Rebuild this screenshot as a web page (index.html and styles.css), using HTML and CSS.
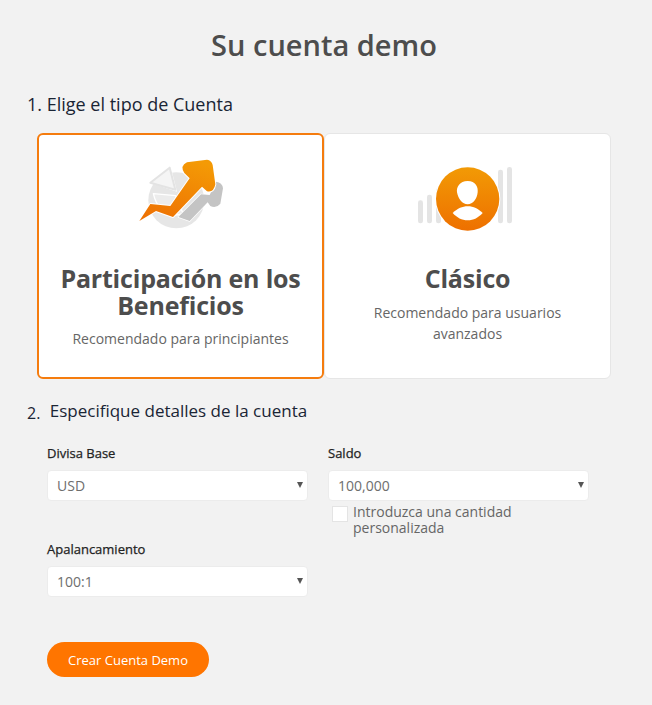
FILE: index.html
```html
<!DOCTYPE html>
<html lang="es">
<head>
<meta charset="utf-8">
<title>Su cuenta demo</title>
<link rel="stylesheet" href="styles.css">
</head>
<body>
<main class="page">
  <h1 class="title">Su cuenta demo</h1>
  <h2 class="step step-one">1. Elige el tipo de Cuenta</h2>
  <div class="cards">
    <div class="card card-selected">
      <svg class="icon" width="120" height="95" viewBox="0 0 360 285" aria-hidden="true">
        <defs>
          <linearGradient id="arrowGrad" x1="0.7" y1="0" x2="0.3" y2="1">
            <stop offset="0" stop-color="#f49a05"/>
            <stop offset="1" stop-color="#ee7203"/>
          </linearGradient>
        </defs>
        <circle cx="166" cy="166" r="84" fill="#e6e6e6"/>
        <path d="M97 146 L164 152 L186 205 Q170 212 150 210 Q110 200 97 146 Z" fill="#ececec" stroke="#ffffff" stroke-width="4" stroke-linejoin="round"/>
        <path d="M82 112 L148 60 L168 140 Z" fill="#ffffff"/>
        <path d="M88 113 L146 68 L163 134 Z" fill="#f5f5f5" stroke="#e3e3e3" stroke-width="6" stroke-linejoin="round"/>
        <path d="M172 216 L240 148 L266 150 L285 110 Q304 112 306 130 L298 176 Q285 192 268 183 L260 172 L206 228 Z" fill="#c4c4c4" stroke="#ffffff" stroke-width="4" stroke-linejoin="round" paint-order="stroke"/>
        <path d="M55 228 L88 177 L148 183 L206 100 L190 84 Q176 62 198 52 L258 44 Q272 46 275 60 L283 118 Q278 144 258 139 L243 125 L156 216 L105 198 Z" fill="url(#arrowGrad)" stroke="#ffffff" stroke-width="6" stroke-linejoin="round" paint-order="stroke"/>
      </svg>
      <h3 class="card-title">Participación en los Beneficios</h3>
      <p class="card-text">Recomendado para principiantes</p>
    </div>
    <div class="card">
      <svg class="icon icon-user" width="120" height="85" viewBox="0 0 360 255" aria-hidden="true">
        <defs>
          <linearGradient id="userGrad" x1="0" y1="0" x2="0" y2="1">
            <stop offset="0" stop-color="#f29a05"/>
            <stop offset="1" stop-color="#ee7000"/>
          </linearGradient>
        </defs>
        <g fill="#e4e4e4">
          <rect x="39" y="136" width="15" height="69" rx="7"/>
          <rect x="66" y="119" width="15" height="86" rx="7"/>
          <rect x="93" y="100" width="15" height="105" rx="7"/>
          <rect x="279" y="44" width="15" height="161" rx="7"/>
          <rect x="306" y="36" width="15" height="169" rx="7"/>
        </g>
        <circle cx="188" cy="132" r="98" fill="#ffffff"/>
        <circle cx="188" cy="132" r="95" fill="url(#userGrad)"/>
        <path d="M188 78 C212 78 220 96 218 112 C216 132 204 148 188 148 C172 148 160 132 156 112 C154 96 164 78 188 78 Z" fill="#ffffff"/>
        <path d="M143 174 C158 160 172 154 188 154 C206 154 220 162 233 174 C220 188 206 196 188 196 C170 196 156 188 143 174 Z" fill="#ffffff"/>
      </svg>
      <h3 class="card-title">Clásico</h3>
      <p class="card-text">Recomendado para usuarios avanzados</p>
    </div>
  </div>
  <h2 class="step step-two"><span class="step-num">2.</span> Especifique detalles de la cuenta</h2>
  <form class="form">
    <div class="field">
      <label class="label" for="currency">Divisa Base</label>
      <div class="select-wrap">
        <select class="select" id="currency"><option>USD</option></select>
      </div>
    </div>
    <div class="field">
      <label class="label" for="balance">Saldo</label>
      <div class="select-wrap">
        <select class="select" id="balance"><option>100,000</option></select>
      </div>
      <label class="custom">
        <span class="checkbox"></span>
        <span class="custom-text">Introduzca una cantidad personalizada</span>
      </label>
    </div>
    <div class="field field-leverage">
      <label class="label" for="leverage">Apalancamiento</label>
      <div class="select-wrap">
        <select class="select" id="leverage"><option>100:1</option></select>
      </div>
    </div>
  </form>
  <button class="submit" type="button">Crear Cuenta Demo</button>
</main>
</body>
</html>
```

FILE: styles.css
```css
* { box-sizing: border-box; }
html, body { margin: 0; padding: 0; }
body {
  background: #f2f2f2;
  font-family: "Open Sans", "Liberation Sans", sans-serif;
  color: #4d4d4d;
}
.page {
  width: 652px;
  height: 705px;
  padding: 25px 0 0 27px;
  overflow: hidden;
}
.title {
  margin: 0 0 0 -27px;
  width: 648px;
  text-align: center;
  font-size: 29px;
  line-height: 40px;
  font-weight: 600;
  color: #4d4d4d;
}
.step {
  margin: 0;
  font-weight: 400;
  line-height: 24px;
  color: #1a2535;
}
.step-one { margin-top: 27px; font-size: 18px; }
.cards {
  display: flex;
  margin: 17px 0 0 10px;
  width: 574px;
  height: 246px;
}
.card {
  flex: 0 0 287px;
  background: #fff;
  border: 1px solid #e6e6e6;
  border-radius: 6px;
  display: flex;
  flex-direction: column;
  align-items: center;
  text-align: center;
  padding: 11px 20px 0;
}
.card-selected {
  border: 2px solid #f57c0e;
  padding-top: 10px;
}
.icon { flex: none; display: block; }
.icon-user { margin: 10px 5px 0 0; }
.card-title {
  margin: 25px 0 0;
  font-size: 25px;
  line-height: 27px;
  font-weight: 700;
  letter-spacing: -0.2px;
  color: #4d4d4d;
}
.card-text {
  margin: 9px 0 0;
  font-size: 14px;
  line-height: 21px;
  color: #666;
}
.icon-user ~ .card-text { margin-top: 10px; padding: 0 20px; }
.step-two { margin-top: 20px; font-size: 17px; }
.step-num { margin-right: 5px; font-size: 16px; position: relative; top: 2px; }
.form {
  display: grid;
  grid-template-columns: 261px 261px;
  column-gap: 20px;
  margin: 21px 0 0 20px;
}
.field { display: flex; flex-direction: column; }
.field-leverage { margin-top: 4px; }
.label {
  font-size: 13px;
  line-height: 18px;
  font-weight: 400;
  -webkit-text-stroke: 0.25px #222;
  color: #222;
  margin-bottom: 8px;
}
.select-wrap { position: relative; height: 31px; }
.select-wrap::after {
  content: "";
  position: absolute;
  right: 5px;
  top: 12px;
  border-left: 3px solid transparent;
  border-right: 3px solid transparent;
  border-top: 6px solid #555;
  pointer-events: none;
}
.select {
  appearance: none;
  -webkit-appearance: none;
  width: 100%;
  height: 31px;
  border: 1px solid #ececec;
  border-radius: 4px;
  background: #fff;
  padding: 0 9px;
  font-family: inherit;
  font-size: 14px;
  color: #6e6e6e;
}
.custom {
  display: flex;
  align-items: flex-start;
  gap: 5px;
  margin: 3px 0 0 4px;
}
.checkbox {
  flex: none;
  width: 16px;
  height: 16px;
  margin-top: 2px;
  background: #fff;
  border: 1px solid #e4e4e4;
}
.custom-text {
  font-size: 14px;
  line-height: 16px;
  color: #666;
}
.submit {
  display: block;
  margin: 45px 0 0 20px;
  width: 162px;
  height: 35px;
  border: 0;
  border-radius: 18px;
  background: #ff7500;
  color: #fff;
  font-family: inherit;
  font-size: 13px;
  padding: 0;
}
```
